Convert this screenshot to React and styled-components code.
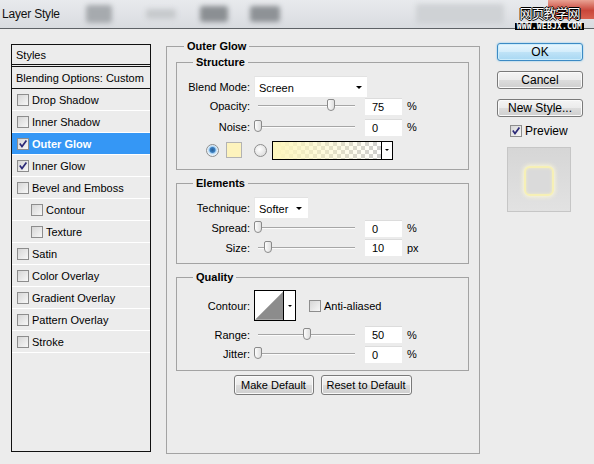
import React from 'react';
import styled, { createGlobalStyle } from 'styled-components';

const GlobalStyle = createGlobalStyle`
    body {
        margin: 0;
        background: #ececec;
        font-family: "Liberation Sans", Arial, sans-serif;
        font-size: 11px;
        color: #000;
    }
`

const Dialog = styled.div`
    width: 594px;
    height: 464px;
    background: #ececec;
    overflow: hidden;
    position: relative;
    display: flex;
    flex-direction: column;
`

const TitleBar = styled.div`
    height: 29px;
    box-sizing: border-box;
    border-bottom: 1px solid #5e6266;
    background: linear-gradient(#e8eaed, #d9dce0);
    display: flex;
    align-items: center;
    padding-left: 2px;
    overflow: hidden;
`

const Title = styled.span`
    font-size: 12px;
    letter-spacing: -0.2px;
    color: #111;
`

const Blob = styled.span`
    width: ${p => p.$w}px;
    height: ${p => p.$h}px;
    margin-left: ${p => p.$ml}px;
    background: ${p => p.$c};
    border-radius: 3px;
    filter: blur(2.5px);
    flex-shrink: 0;
`

const CloseButton = styled.span`
    margin-left: auto;
    align-self: flex-start;
    width: 46px;
    height: 19px;
    border-radius: 0 0 0 4px;
    background: linear-gradient(#e9a293, #c9463a 55%, #d8614f);
    filter: blur(0.6px);
`

const Watermark = styled.div`
    position: absolute;
    top: 5px;
    right: 10px;
    display: flex;
    flex-direction: column;
    align-items: center;
`

const WatermarkCn = styled.span`
    font-family: "Noto Sans CJK SC", sans-serif;
    font-size: 13px;
    line-height: 15px;
    color: #fff;
    letter-spacing: -1px;
    text-shadow: -1px 0 #000, 1px 0 #000, 0 -1px #000, 0 1px #000;
`

const WatermarkUrl = styled.span`
    margin-top: 3px;
    background: #000;
    color: #fff;
    font-family: "DejaVu Sans Mono", monospace;
    font-weight: bold;
    font-size: 8px;
    line-height: 7px;
    padding: 0 2px;
    letter-spacing: 0.2px;
`

const Body = styled.div`
    display: flex;
    padding: 15px 0 0 11px;
`

const StylesPanel = styled.div`
    width: 140px;
    height: 408px;
    box-sizing: border-box;
    border: 1px solid #111;
    display: flex;
    flex-direction: column;
`

const PanelHeader = styled.div`
    height: 22px;
    box-sizing: border-box;
    border-bottom: 3px double #111;
    padding-left: 4px;
    display: flex;
    align-items: center;
`

const BlendingRow = styled.div`
    height: 22px;
    box-sizing: border-box;
    border-bottom: 1px solid #111;
    padding-left: 4px;
    display: flex;
    align-items: center;
`

const StyleItem = styled.div`
    height: 22px;
    box-sizing: border-box;
    border-bottom: 1px solid #fff;
    padding-left: ${p => (p.$sub ? 19 : 5)}px;
    display: flex;
    align-items: center;
    gap: 3px;
    background: ${p => (p.$selected ? '#3597f5' : 'transparent')};
    color: ${p => (p.$selected ? '#fff' : '#000')};
    font-weight: ${p => (p.$selected ? 'bold' : 'normal')};
`

const Box = styled.span`
    width: 12px;
    height: 12px;
    box-sizing: border-box;
    border: 1px solid #8d8d8d;
    background: linear-gradient(135deg, #d6d6d6, #f7f7f7);
    display: flex;
    align-items: center;
    justify-content: center;
    flex-shrink: 0;
    margin-left: ${p => p.$ml || 0}px;
`

const CheckBox = ({ checked, ml }) => (
    <Box $ml={ml}>
        {checked && (
            <svg width="10" height="10" viewBox="0 0 10 10">
                <path d="M1.8 4.6 L4 7.6 L8.4 1.6" fill="none" stroke="#2c2a78" strokeWidth="1.7" />
            </svg>
        )}
    </Box>
)

const Main = styled.div`
    margin-left: 15px;
    margin-top: 2px;
    width: 314px;
    height: 408px;
    box-sizing: border-box;
    border: 1px solid #a3a3a3;
    position: relative;
    padding: 15px 10px 0 9px;
    display: flex;
    flex-direction: column;
`

const Group = styled.div`
    position: relative;
    border: 1px solid #a3a3a3;
    margin-top: ${p => p.$mt || 0}px;
    padding: ${p => p.$pad};
    display: flex;
    flex-direction: column;
`

const Legend = styled.span`
    position: absolute;
    top: -7px;
    left: ${p => p.$left}px;
    padding: 0 3px;
    background: #ececec;
    font-weight: bold;
    line-height: 13px;
`

const Row = styled.div`
    display: flex;
    align-items: center;
    height: ${p => p.$h}px;
    margin-top: ${p => p.$mt || 0}px;
    margin-left: ${p => p.$ml || 0}px;
`

const Label = styled.span`
    width: 73px;
    margin-right: 4px;
    text-align: right;
    flex-shrink: 0;
`

const Select = styled.div`
    width: ${p => p.$w}px;
    height: 21px;
    box-sizing: border-box;
    background: #fff;
    border-top: 1px solid #e2e2e2;
    border-left: 1px solid #e8e8e8;
    padding: 1px ${p => p.$pr}px 0 4px;
    display: flex;
    align-items: center;
    justify-content: space-between;
`

const Arrow = styled.span`
    width: 0;
    height: 0;
    border-left: ${p => p.$s}px solid transparent;
    border-right: ${p => p.$s}px solid transparent;
    border-top: ${p => p.$s}px solid #000;
`

const Track = styled.div`
    position: relative;
    width: 97px;
    height: 20px;
    margin-left: 4px;
    flex-shrink: 0;
    &::before {
        content: '';
        position: absolute;
        left: 0;
        right: 0;
        top: 9px;
        height: 1px;
        background: #a6a6a6;
        border-bottom: 1px solid #fbfbfb;
    }
`

const Thumb = styled.span`
    position: absolute;
    top: 3px;
    width: 8px;
    height: 12px;
    margin-left: -4px;
    box-sizing: border-box;
    border: 1px solid #8a8a8a;
    border-radius: 2px 2px 4px 4px;
    background: linear-gradient(90deg, #fdfdfd, #dedede);
`

const Field = styled.div`
    width: 37px;
    height: 17px;
    box-sizing: border-box;
    margin-left: 10px;
    background: #fff;
    border-top: 1px solid #dcdcdc;
    padding-left: 7px;
    line-height: 16px;
    flex-shrink: 0;
`

const Unit = styled.span`
    margin-left: 5px;
`

const Radio = styled.span`
    width: 13px;
    height: 13px;
    box-sizing: border-box;
    border-radius: 50%;
    border: 1px solid #8e8e8e;
    margin-left: ${p => p.$ml || 0}px;
    background: ${p => (p.$on
        ? 'radial-gradient(circle at 50% 45%, #2a5d93 0, #3b7fc0 2.5px, #a9d2f3 3.5px, #e8f2fa 5px)'
        : 'radial-gradient(circle at 40% 40%, #fff, #d4d4d4)')};
    flex-shrink: 0;
`

const Swatch = styled.span`
    width: 16px;
    height: 16px;
    box-sizing: border-box;
    margin-left: 7px;
    border: 1px solid #b3b3b3;
    background: #fdf3bd;
`

const GradientPicker = styled.div`
    width: 121px;
    height: 19px;
    box-sizing: border-box;
    margin-left: 5px;
    border: 1px solid #000;
    display: flex;
`

const GradientFill = styled.span`
    flex: 1;
    background:
        linear-gradient(90deg, #fdf6bd, rgba(253, 246, 189, 0)),
        repeating-conic-gradient(#cfcfcf 0 25%, #fff 0 50%) 0 0 / 8px 8px;
`

const PickerArrow = styled.span`
    width: 10px;
    border-left: 1px solid #000;
    background: #fff;
    display: flex;
    align-items: center;
    justify-content: center;
`

const ContourBox = styled.div`
    width: 42px;
    height: 31px;
    box-sizing: border-box;
    border: 1px solid #000;
    display: flex;
    background: #fff;
`

const ContourArrow = styled.span`
    width: 11px;
    border-left: 1px solid #000;
    display: flex;
    align-items: center;
    justify-content: center;
`

const InlineLabel = styled.span`
    margin-left: 3px;
`

const ButtonRow = styled.div`
    display: flex;
    justify-content: center;
    gap: 7px;
    margin-top: 4px;
`

const Button = styled.div`
    width: ${p => p.$w}px;
    height: ${p => p.$h || 20}px;
    box-sizing: border-box;
    border: 1px solid ${p => (p.$primary ? '#3c8ac4' : '#7a7a7a')};
    border-radius: 3px;
    background: ${p => (p.$primary
        ? 'linear-gradient(#e9f6fd, #d3edfb 50%, #bfe3f7 51%, #a8d8f3)'
        : 'linear-gradient(#f4f4f4, #ebebeb 50%, #dcdcdc 51%, #cfcfcf)')};
    box-shadow: ${p => (p.$primary ? '0 0 2px #6fc2ee, inset 0 0 0 1px #ccecfb' : 'inset 0 0 0 1px #fafafa')};
    display: flex;
    align-items: center;
    justify-content: center;
    font-size: ${p => p.$fs || 11}px;
`

const Side = styled.div`
    margin-left: 17px;
    margin-top: -1px;
    width: 86px;
    display: flex;
    flex-direction: column;
    gap: 10px;
`

const PreviewToggle = styled.div`
    display: flex;
    align-items: center;
    margin: -3px 0 0 13px;
    font-size: 12px;
    gap: 3px;
`

const PreviewBox = styled.div`
    width: 64px;
    height: 65px;
    margin: -1px 0 0 10px;
    box-sizing: border-box;
    border: 1px solid #c6c6c6;
    background: linear-gradient(#d6d6d6, #e2e2e2);
    display: flex;
    align-items: center;
    justify-content: center;
`

const GlowSquare = styled.span`
    width: 30px;
    height: 30px;
    margin-top: 2px;
    box-sizing: border-box;
    border: 2px solid #f6f0b6;
    border-radius: 6px;
    box-shadow: 0 0 4px 1px #fbf7d6, inset 0 0 3px #f3eec4;
    background: #dadada;
`

const styleItems = [
    { label: 'Drop Shadow' },
    { label: 'Inner Shadow' },
    { label: 'Outer Glow', checked: true, selected: true },
    { label: 'Inner Glow', checked: true },
    { label: 'Bevel and Emboss' },
    { label: 'Contour', sub: true },
    { label: 'Texture', sub: true },
    { label: 'Satin' },
    { label: 'Color Overlay' },
    { label: 'Gradient Overlay' },
    { label: 'Pattern Overlay' },
    { label: 'Stroke' },
]

const Slider = ({ value }) => (
    <Track>
        <Thumb style={{ left: `${value}%` }} />
    </Track>
)

const SliderRow = ({ label, value, pos, unit, h, mt }) => (
    <Row $h={h} $mt={mt}>
        <Label>{label}</Label>
        <Slider value={pos} />
        <Field>{value}</Field>
        <Unit>{unit}</Unit>
    </Row>
)

export default function App() {
    return (
        <Dialog>
            <GlobalStyle />
            <TitleBar>
                <Title>Layer Style</Title>
                <Blob $w={26} $h={18} $ml={26} $c="#a6aaae" />
                <Blob $w={30} $h={10} $ml={34} $c="#c7cacd" />
                <Blob $w={28} $h={16} $ml={24} $c="#8b8f93" />
                <Blob $w={30} $h={16} $ml={22} $c="#8e9296" />
                <Blob $w={88} $h={20} $ml={136} $c="#cfd2d5" />
                <CloseButton />
            </TitleBar>
            <Watermark>
                <WatermarkCn>网页教学网</WatermarkCn>
                <WatermarkUrl>WWW.WEBJX.COM</WatermarkUrl>
            </Watermark>

            <Body>
                <StylesPanel>
                    <PanelHeader>Styles</PanelHeader>
                    <BlendingRow>Blending Options: Custom</BlendingRow>
                    {styleItems.map(item => (
                        <StyleItem key={item.label} $sub={item.sub} $selected={item.selected}>
                            <CheckBox checked={item.checked} />
                            {item.label}
                        </StyleItem>
                    ))}
                </StylesPanel>

                <Main>
                    <Legend $left={17}>Outer Glow</Legend>

                    <Group $pad="13px 0 9px 0">
                        <Legend $left={16}>Structure</Legend>
                        <Row $h={21}>
                            <Label>Blend Mode:</Label>
                            <Select $w={113} $pr={5}>
                                Screen
                                <Arrow $s={3.5} />
                            </Select>
                        </Row>
                        <SliderRow label="Opacity:" value="75" pos={75} unit="%" h={20} mt={-1} />
                        <SliderRow label="Noise:" value="0" pos={0} unit="%" h={20} mt={1} />
                        <Row $h={20} $mt={3} $ml={29}>
                            <Radio $on />
                            <Swatch />
                            <Radio $ml={12} />
                            <GradientPicker>
                                <GradientFill />
                                <PickerArrow><Arrow $s={2.5} /></PickerArrow>
                            </GradientPicker>
                        </Row>
                    </Group>

                    <Group $mt={13} $pad="13px 0 6px 0">
                        <Legend $left={16}>Elements</Legend>
                        <Row $h={21}>
                            <Label>Technique:</Label>
                            <Select $w={54} $pr={6}>
                                Softer
                                <Arrow $s={3.5} />
                            </Select>
                        </Row>
                        <SliderRow label="Spread:" value="0" pos={0} unit="%" h={20} />
                        <SliderRow label="Size:" value="10" pos={10} unit="px" h={19} />
                    </Group>

                    <Group $mt={13} $pad="12px 0 6px 0">
                        <Legend $left={16}>Quality</Legend>
                        <Row $h={31}>
                            <Label>Contour:</Label>
                            <ContourBox>
                                <svg width="29" height="29" viewBox="0 0 29 29">
                                    <path d="M0 29 L29 0 L29 29 Z" fill="#8c8c8c" />
                                </svg>
                                <ContourArrow><Arrow $s={2.5} /></ContourArrow>
                            </ContourBox>
                            <CheckBox ml={13} />
                            <InlineLabel>Anti-aliased</InlineLabel>
                        </Row>
                        <SliderRow label="Range:" value="50" pos={50} unit="%" h={19} mt={4} />
                        <SliderRow label="Jitter:" value="0" pos={0} unit="%" h={20} />
                    </Group>

                    <ButtonRow>
                        <Button $w={80}>Make Default</Button>
                        <Button $w={91}>Reset to Default</Button>
                    </ButtonRow>
                </Main>

                <Side>
                    <Button $w={86} $h={18} $fs={12} $primary>OK</Button>
                    <Button $w={86} $h={18} $fs={12}>Cancel</Button>
                    <Button $w={86} $h={18} $fs={12}>New Style...</Button>
                    <PreviewToggle>
                        <CheckBox checked />
                        Preview
                    </PreviewToggle>
                    <PreviewBox>
                        <GlowSquare />
                    </PreviewBox>
                </Side>
            </Body>
        </Dialog>
    );
}
